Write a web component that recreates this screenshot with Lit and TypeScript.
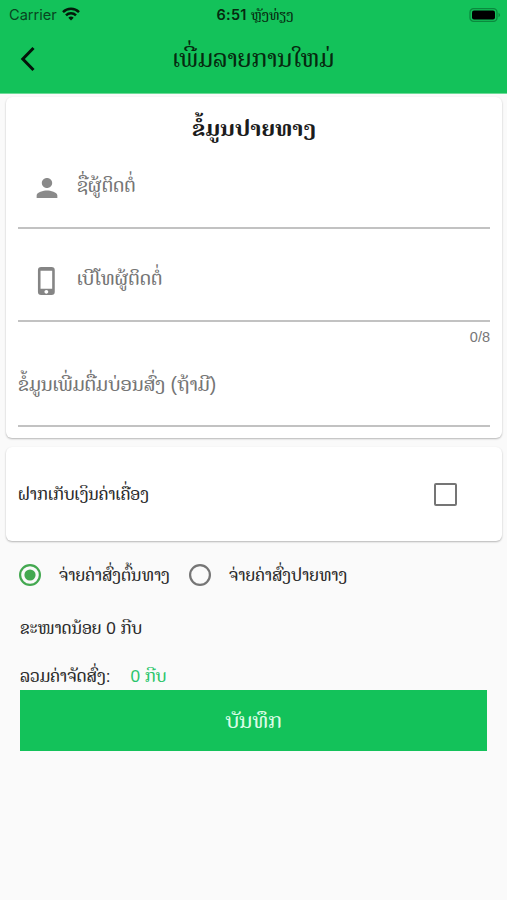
import { LitElement, html, css, svg } from "lit";

class AppRoot extends LitElement {
  static styles = css`
    :host {
      display: block;
      height: 900px;
      overflow: hidden;
      background: #fafafa;
      color: #2b2b2b;
      font-family: "Liberation Sans", "Noto Serif Lao", "Noto Sans Lao", sans-serif;
      --green: #13c25a;
    }
    * { box-sizing: border-box; }
    span, h1, h2, button { white-space: nowrap; }
    svg { display: block; flex: none; }
    header { height: 94px; background: var(--green); color: #06290f; border-bottom: 1px solid #6edb98; }
    .status { height: 27px; display: grid; grid-template-columns: 1fr auto 1fr; align-items: center; padding: 0 6px 0 9px; }
    .carrier { display: flex; align-items: center; gap: 5px; font: 14.6px/28px Inter, sans-serif; color: #08451f; }
    .wifi { margin-bottom: 2px; }
    .clock { display: flex; gap: 4px; align-items: center; }
    .time { font: 600 14.5px/28px Inter, sans-serif; letter-spacing: 0.3px; }
    .ampm { font-size: 14.3px; line-height: 30px; }
    .battery { justify-self: end; margin-bottom: 1px; }
    .bar { height: 64px; display: grid; grid-template-columns: 54px 1fr 54px; align-items: center; }
    .back { padding-left: 20px; }
    .title { margin: 0; text-align: center; font-size: 24.5px; font-weight: 400; line-height: 64px; }
    .card { margin: 3px 5px 0 6px; background: #fff; border-radius: 6px; box-shadow: 0 1px 2px rgba(0, 0, 0, 0.28); padding: 0 12px; }
    .dest { height: 341px; }
    .heading { margin: 0; height: 52px; text-align: center; font-size: 22px; font-weight: 700; line-height: 64px; color: #1c1c1c; }
    .field { border-bottom: 2px solid #c2c2c2; display: flex; color: #757575; font-size: 19.3px; }
    .name { height: 80px; }
    .phone { height: 93px; }
    .extra { height: 83px; font-size: 19.5px; }
    .icon { width: 59px; padding-left: 18px; }
    .name .icon { padding-top: 29px; }
    .phone .icon { padding-top: 38px; }
    .name .label { line-height: 73px; }
    .phone .label { line-height: 99px; }
    .extra .label { line-height: 80px; }
    .count { height: 22px; text-align: right; font: 14.5px/30px "Liberation Sans", sans-serif; color: #777; }
    .cod { margin-top: 9px; height: 94px; display: flex; align-items: center; justify-content: space-between; padding-right: 45px; font-size: 17.1px; }
    .box { width: 23px; height: 23px; border: 2.5px solid #757575; border-radius: 2px; }
    .radios { display: flex; align-items: center; height: 68px; padding-left: 19px; font-size: 17.1px; }
    .radio { display: flex; align-items: center; gap: 18px; width: 170px; }
    .size { height: 38px; line-height: 40px; padding-left: 20px; font-size: 17.1px; }
    .total { height: 43px; line-height: 58px; padding-left: 20px; display: flex; gap: 20px; font-size: 17.2px; }
    .sum { color: #2bc56b; }
    .save { display: block; margin: 0 20px; width: 467px; height: 61px; border: 0; padding: 0; background: var(--green); color: #d9fbe5; font: inherit; font-size: 21.8px; }
  `;

  radio(on: boolean) {
    const c = on ? "#43a850" : "#757575";
    return html`<svg width="22" height="22" viewBox="0 0 22 22">
      <circle cx="11" cy="11" r="9.9" fill="none" stroke=${c} stroke-width="2.2"></circle>
      ${on ? svg`<circle cx="11" cy="11" r="5.6" fill=${c}></circle>` : null}
    </svg>`;
  }

  render() {
    return html`
      <header>
        <div class="status">
          <div class="carrier"><span>Carrier</span>
            <svg class="wifi" width="18" height="14" viewBox="0 0 18 14" fill="none" stroke="#031a0a" stroke-width="2.5">
              <path d="M1 5.100a11.400 11.400 0 0 1 16 0"></path>
              <path d="M4 8.300a7.100 7.100 0 0 1 10 0"></path>
              <path d="M9 13.600 6.300 10.700a3.900 3.900 0 0 1 5.400 0z" fill="#031a0a" stroke="none"></path>
            </svg>
          </div>
          <div class="clock"><span class="time">6:51</span><span class="ampm">ຫຼັງທ່ຽງ</span></div>
          <svg class="battery" width="32" height="14" viewBox="0 0 32 14">
            <rect x="1" y="0.7" width="27" height="12.6" rx="3.6" fill="none" stroke="#0b8a3e" stroke-width="1.3"></rect>
            <rect x="3" y="2.5" width="23" height="9" rx="2" fill="#000"></rect>
            <path d="M29.500 4.800v4.400q1.600-.8 1.600-2.200t-1.600-2.200z" fill="#0b8a3e"></path>
          </svg>
        </div>
        <div class="bar">
          <svg class="back" width="36" height="26" viewBox="0 0 16 26" fill="none" stroke="#04140a" stroke-width="3"><path d="M13.500 2 2.800 13 13.500 24"></path></svg>
          <h1 class="title">ເພີ່ມລາຍການໃຫມ່</h1>
        </div>
      </header>
      <section class="card dest">
        <h2 class="heading">ຂໍ້ມູນປາຍທາງ</h2>
        <div class="field name">
          <div class="icon"><svg width="22" height="20" viewBox="3.500 4 17 16" preserveAspectRatio="none" fill="#8a8a8a"><path d="M12 12c2.210 0 4-1.790 4-4s-1.790-4-4-4-4 1.790-4 4 1.790 4 4 4zm0 2c-2.670 0-8 1.340-8 4v2h16v-2c0-2.660-5.330-4-8-4z"></path></svg></div>
          <span class="label">ຊື່ຜູ້ຕິດຕໍ່</span>
        </div>
        <div class="field phone">
          <div class="icon"><svg width="22" height="28" viewBox="3.500 1 17 22" preserveAspectRatio="none" fill="#858585"><path d="M15.500 1h-8A2.500 2.500 0 0 0 5 3.500v17A2.500 2.500 0 0 0 7.500 23h8a2.500 2.500 0 0 0 2.500-2.500v-17A2.500 2.500 0 0 0 15.500 1zm-4 21c-.83 0-1.500-.67-1.500-1.500s.67-1.500 1.500-1.500 1.500.67 1.500 1.500-.67 1.500-1.500 1.500zm4.500-4H7V4h9v14z"></path></svg></div>
          <span class="label">ເບີໂທຜູ້ຕິດຕໍ່</span>
        </div>
        <div class="count">0/8</div>
        <div class="field extra"><span class="label">ຂໍ້ມູນເພີ່ມຕື່ມບ່ອນສົ່ງ (ຖ້າມີ)</span></div>
      </section>
      <section class="card cod"><span>ຝາກເກັບເງິນຄ່າເຄື່ອງ</span><div class="box"></div></section>
      <div class="radios">
        <div class="radio">${this.radio(true)}<span>ຈ່າຍຄ່າສົ່ງຕົ້ນທາງ</span></div>
        <div class="radio">${this.radio(false)}<span>ຈ່າຍຄ່າສົ່ງປາຍທາງ</span></div>
      </div>
      <div class="size">ຂະໜາດນ້ອຍ 0 ກີບ</div>
      <div class="total"><span>ລວມຄ່າຈັດສົ່ງ:</span><span class="sum">0 ກີບ</span></div>
      <button class="save">ບັນທຶກ</button>`;
  }
}
customElements.define("app-root", AppRoot);
